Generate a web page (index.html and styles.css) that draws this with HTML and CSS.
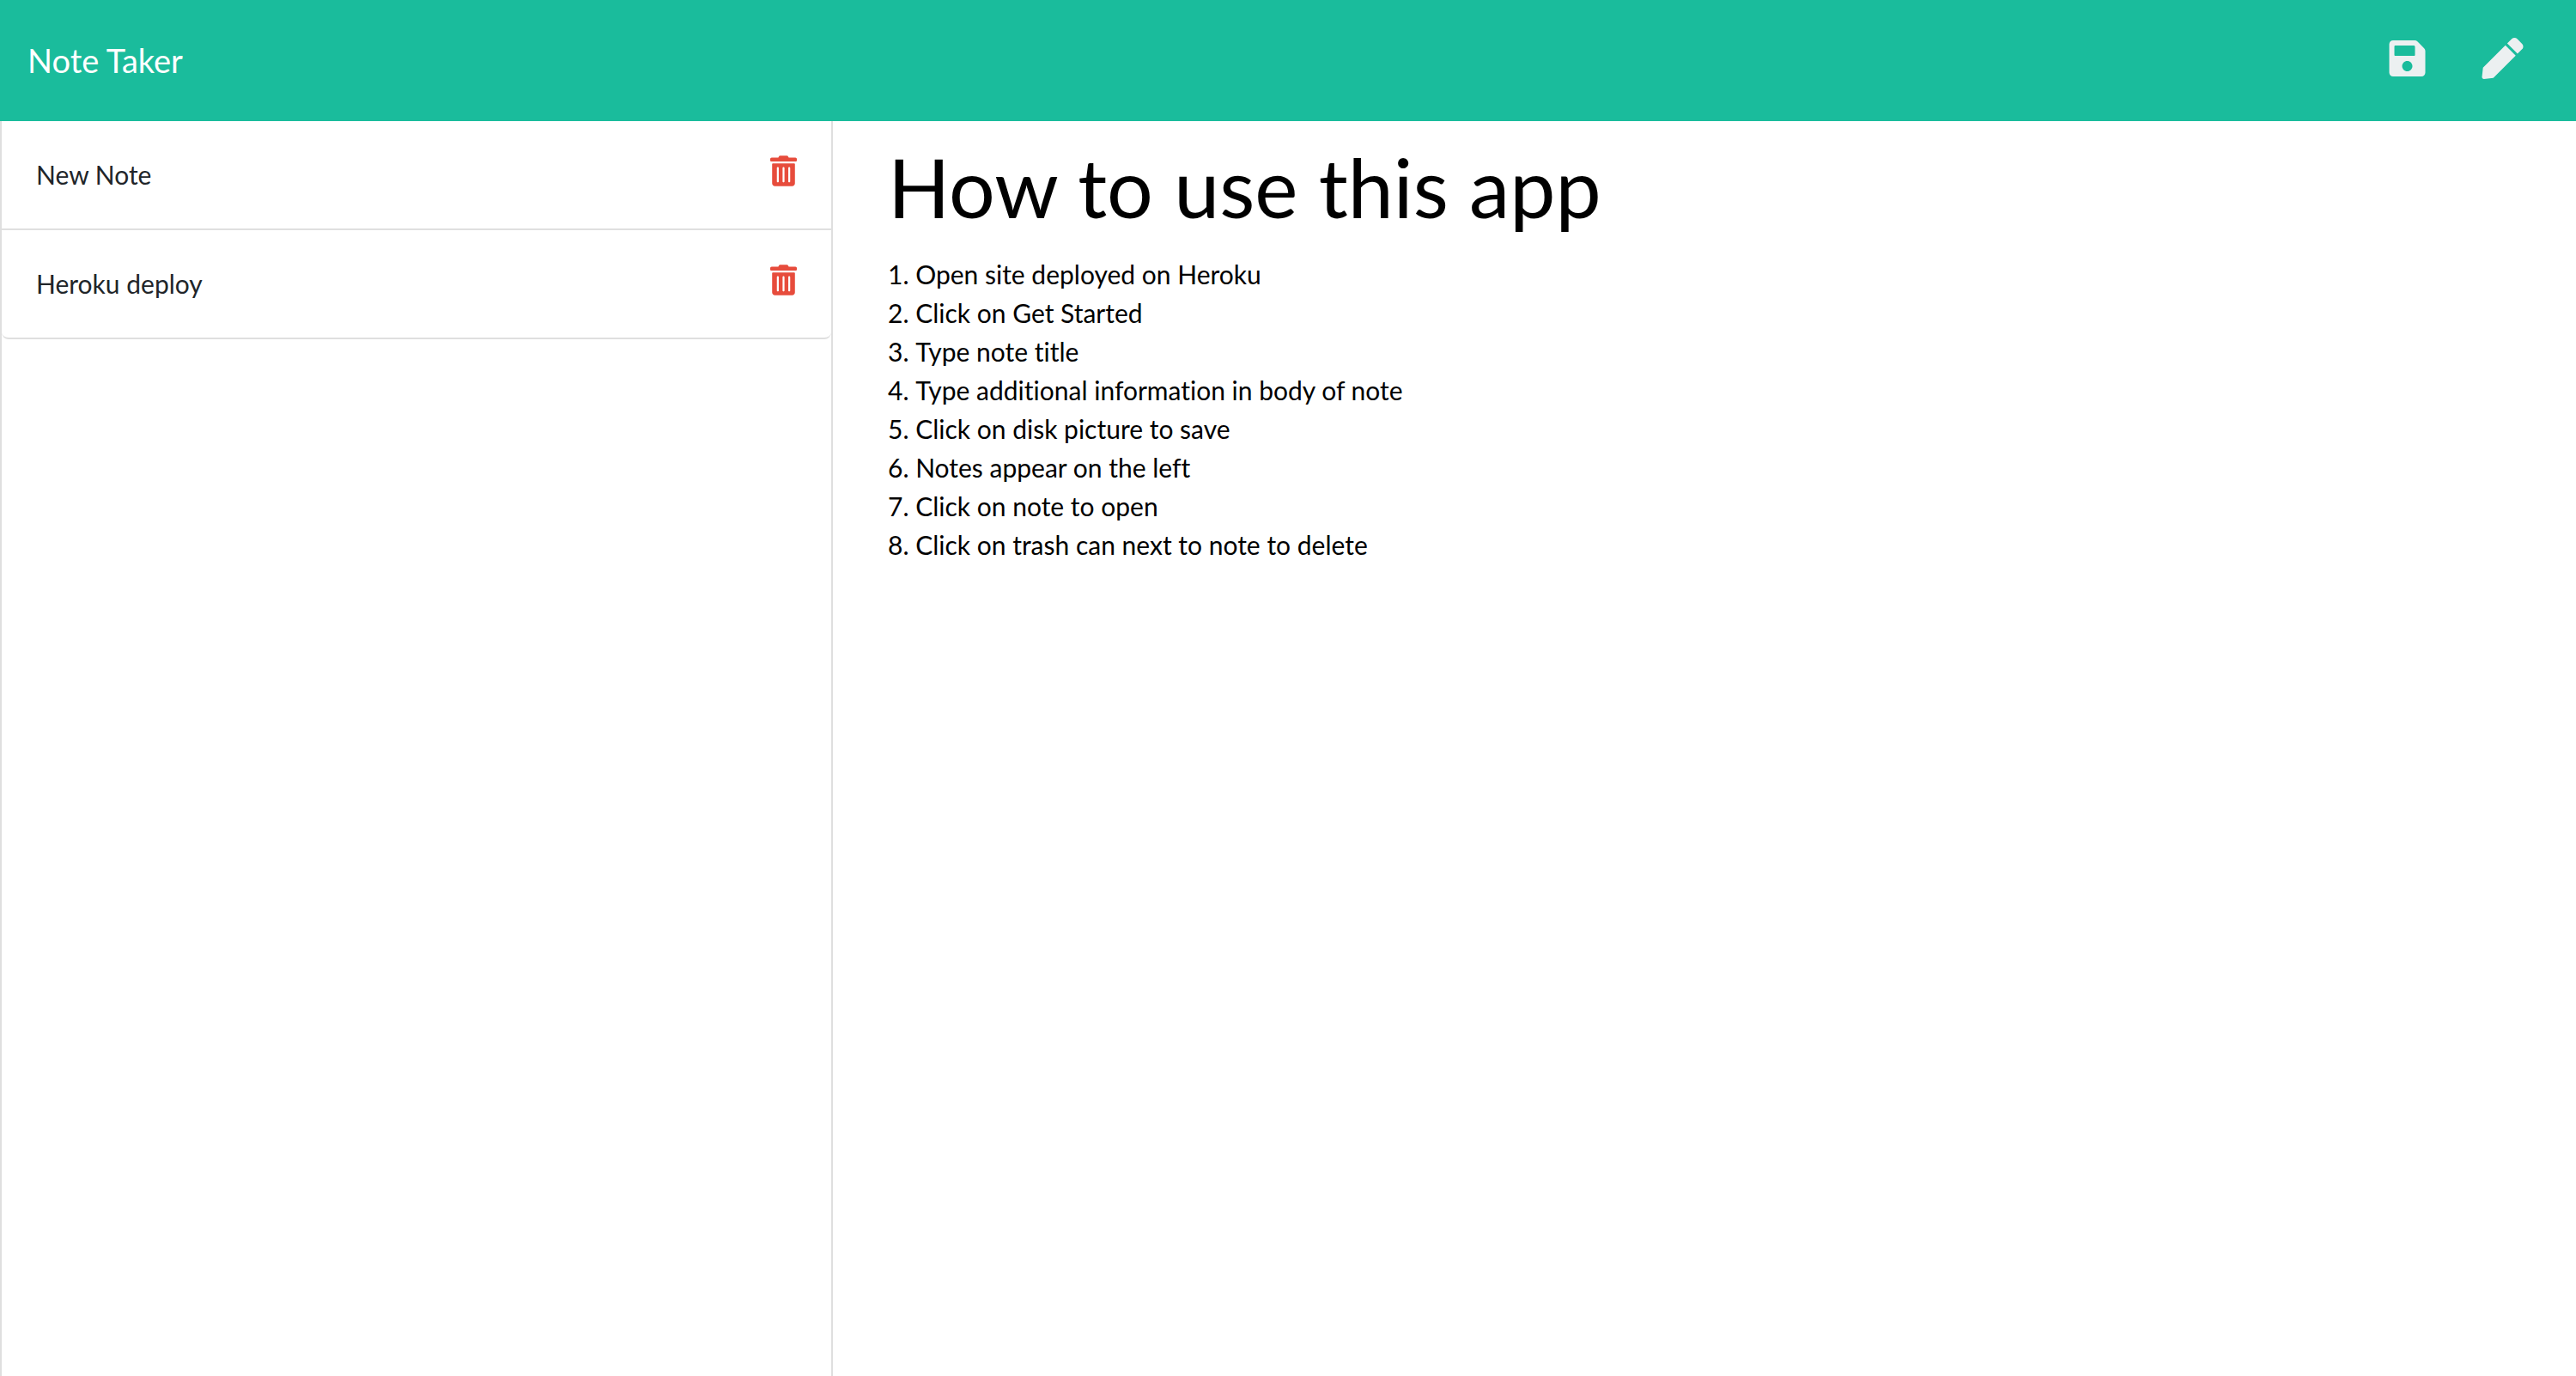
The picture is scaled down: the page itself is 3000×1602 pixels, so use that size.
FILE: index.html
```html
<!DOCTYPE html>
<html lang="en">
<head>
<meta charset="utf-8">
<meta name="viewport" content="width=device-width, initial-scale=1">
<title>Note Taker</title>
<link rel="stylesheet" href="styles.css">
</head>
<body>
<svg class="sprite" aria-hidden="true">
  <symbol id="trash" viewBox="0 0 448 512">
    <path fill-rule="evenodd" d="M0 84V56c0-13 11-24 24-24h112l9-19c4-8 12-13 21-13h115c9 0 17 5 21 13l10 19h112c13 0 24 11 24 24v28c0 7-5 12-12 12H12C5 96 0 91 0 84zM416 140v324c0 27-21 48-48 48H80c-27 0-48-21-48-48V140c0-7 5-12 12-12h360c7 0 12 5 12 12zM144 208c0-9-7-16-16-16s-16 7-16 16v224c0 9 7 16 16 16s16-7 16-16zM240 208c0-9-7-16-16-16s-16 7-16 16v224c0 9 7 16 16 16s16-7 16-16zM336 208c0-9-7-16-16-16s-16 7-16 16v224c0 9 7 16 16 16s16-7 16-16z"/>
  </symbol>
</svg>
<header class="navbar">
  <a class="brand" href="#">Note Taker</a>
  <div class="actions">
    <button class="action" type="button" aria-label="Save note">
      <svg class="icon-save" viewBox="0 0 448 512"><path d="M433.941 129.941l-83.882-83.882A48 48 0 0 0 316.118 32H48C21.49 32 0 53.49 0 80v352c0 26.51 21.49 48 48 48h352c26.51 0 48-21.49 48-48V163.882a48 48 0 0 0-14.059-33.941zM224 416c-35.346 0-64-28.654-64-64 0-35.346 28.654-64 64-64s64 28.654 64 64c0 35.346-28.654 64-64 64zm96-304.52V212c0 6.627-5.373 12-12 12H76c-6.627 0-12-5.373-12-12V108c0-6.627 5.373-12 12-12h228.52c3.183 0 6.235 1.264 8.485 3.515l3.48 3.48A11.996 11.996 0 0 1 320 111.48z"/></svg>
    </button>
    <button class="action" type="button" aria-label="New note">
      <svg class="icon-pen" viewBox="0 0 512 512"><path d="M290.74 93.24l128.02 128.02-277.99 277.99-114.14 12.6C11.35 513.54-1.56 500.62.14 485.34l12.7-114.22 277.9-277.88zm207.2-19.06l-60.11-60.11c-18.75-18.75-49.16-18.75-67.91 0l-56.55 56.55 128.02 128.02 56.55-56.55c18.75-18.76 18.75-49.16 0-67.91z"/></svg>
    </button>
  </div>
</header>
<div class="layout">
  <aside class="sidebar">
    <ul class="notes">
      <li class="note">
        <span>New Note</span>
        <button class="delete" type="button" aria-label="Delete New Note"><svg class="icon-trash"><use href="#trash"/></svg></button>
      </li>
      <li class="note">
        <span>Heroku deploy</span>
        <button class="delete" type="button" aria-label="Delete Heroku deploy"><svg class="icon-trash"><use href="#trash"/></svg></button>
      </li>
    </ul>
  </aside>
  <main class="content">
    <h1 class="title">How to use this app</h1>
    <ol class="steps">
      <li>Open site deployed on Heroku</li>
      <li>Click on Get Started</li>
      <li>Type note title</li>
      <li>Type additional information in body of note</li>
      <li>Click on disk picture to save</li>
      <li>Notes appear on the left</li>
      <li>Click on note to open</li>
      <li>Click on trash can next to note to delete</li>
    </ol>
  </main>
</div>
</body>
</html>
```
FILE: styles.css
```css
* {
  box-sizing: border-box;
}

body {
  display: flex;
  flex-direction: column;
  min-height: 100vh;
  margin: 0;
  background: #fff;
  color: #000;
  font-family: Lato, "Open Sans", sans-serif;
  font-size: 30px;
  font-variant-ligatures: none;
  line-height: 45px;
}

button {
  display: flex;
  padding: 0;
  border: 0;
  background: none;
  color: inherit;
  cursor: pointer;
}

svg {
  display: block;
  fill: currentColor;
}

.sprite {
  display: none;
}

.navbar {
  display: flex;
  align-items: center;
  justify-content: space-between;
  padding: 40px 61px 41px 32px;
  background: #1abc9c;
}

.brand {
  color: #fff;
  font-size: 38px;
  line-height: 60px;
  text-decoration: none;
}

.actions {
  display: flex;
  gap: 65px;
  padding-bottom: 4px;
  color: #ecf0f1;
}

.icon-save {
  width: 43px;
  height: 48px;
}

.icon-pen {
  width: 49px;
  height: 48px;
}

.layout {
  display: grid;
  flex: 1;
  grid-template-columns: 97fr 203fr;
}

.sidebar {
  border: solid #dfdfdf;
  border-width: 0 2px;
}

.notes {
  margin: 0;
  padding: 0;
  list-style: none;
}

.note {
  display: flex;
  align-items: center;
  justify-content: space-between;
  padding: 40px;
  border-bottom: 2px solid #dfdfdf;
  color: #212529;
}

.note:last-child {
  border-radius: 0 0 8px 8px;
}

.delete {
  padding-bottom: 9px;
  color: #e74c3c;
}

.icon-trash {
  width: 31px;
  height: 36px;
}

.content {
  padding: 18px 64px;
}

.title {
  margin: 0 0 22px;
  font-size: 95px;
  font-weight: 400;
  line-height: 116px;
}

.steps {
  margin: 0;
  padding: 0;
  list-style-position: inside;
}
```
